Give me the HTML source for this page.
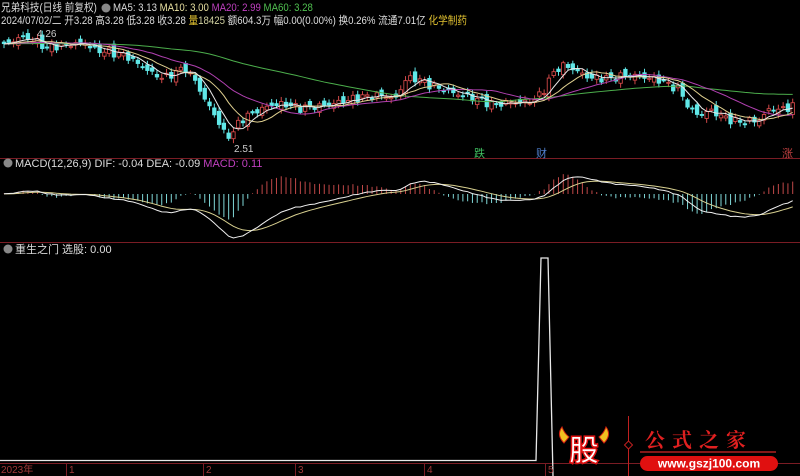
<!DOCTYPE html>
<html><head><meta charset="utf-8"><style>
body{margin:0;background:#000;width:800px;height:476px;overflow:hidden;position:relative;font-family:"Liberation Sans","Noto Sans CJK SC",sans-serif;}
.t{position:absolute;font-size:11px;white-space:nowrap;color:#ddd;line-height:12px}
.n{transform:scaleX(0.876);transform-origin:0 0}
</style></head><body>
<svg id="s" width="800" height="476" style="position:absolute;left:0;top:0">
<line x1="0" y1="158.5" x2="800" y2="158.5" stroke="#7a1c24"/>
<line x1="0" y1="242.5" x2="800" y2="242.5" stroke="#7a1c24"/>
<line x1="0" y1="463.5" x2="800" y2="463.5" stroke="#7a1c24"/>
<g id="g"></g>
<polyline points="0,460.5 536,460.5 541,258 548,258 553,476" fill="none" stroke="#e8e8e8" stroke-width="1.3"/>
<circle cx="8" cy="163" r="4.5" fill="#888"/><circle cx="8" cy="249" r="4.5" fill="#888"/><circle cx="106" cy="8" r="4.5" fill="#888"/>
<g fill="#a03838" font-size="10" font-family="Liberation Sans,Noto Sans CJK SC,sans-serif">
<text x="1" y="473">2023年</text><text x="69" y="473">1</text><text x="206" y="473">2</text><text x="298" y="473">3</text><text x="427" y="473">4</text><text x="548" y="473">5</text></g>
<g stroke="#7a1c24"><line x1="66.5" y1="464" x2="66.5" y2="476"/><line x1="203.5" y1="464" x2="203.5" y2="476"/><line x1="295.5" y1="464" x2="295.5" y2="476"/><line x1="424.5" y1="464" x2="424.5" y2="476"/><line x1="545.5" y1="464" x2="545.5" y2="476"/></g>
<path d="M562 427 q-6 8 2 16 l5 -6 q-5 -4 -7 -10z M606 427 q6 8 -2 16 l-5 -6 q5 -4 7 -10z" fill="#f0c020" stroke="#d02010"/>
<text x="584" y="461" text-anchor="middle" font-size="30" font-weight="bold" fill="#fff" stroke="#e01010" stroke-width="1.5" font-family="Noto Sans CJK SC,sans-serif">股</text>
<line x1="628.5" y1="416" x2="628.5" y2="476" stroke="#c02020"/>
<path d="M628.5 441 l4 4 l-4 4 l-4 -4z" fill="#000" stroke="#c02020"/>
<text x="645" y="447" font-size="20" font-weight="bold" fill="#e02020" letter-spacing="7" font-family="Noto Serif CJK SC,serif">公式之家</text>
<line x1="640" y1="452" x2="776" y2="452" stroke="#b02020" stroke-width="1.5"/>
<rect x="640" y="456" width="138" height="15" rx="7.5" fill="#e01010"/>
<text x="709" y="467.5" text-anchor="middle" font-size="12" font-weight="bold" fill="#fff">www.gszj100.com</text>
<text x="474" y="157" font-size="11" fill="#3fc060" font-family="Noto Sans CJK SC,sans-serif">跌</text>
<text x="536" y="157" font-size="11" fill="#5080d0" font-family="Noto Sans CJK SC,sans-serif">财</text>
<text x="782" y="157" font-size="11" fill="#c04040" font-family="Noto Sans CJK SC,sans-serif">涨</text>
<text x="37" y="37" font-size="10" fill="#ccc">4.26</text>
<text x="234" y="152" font-size="10" fill="#ccc">2.51</text>
</svg>
<div class="t n" style="left:1px;top:2px">兄弟科技(日线 前复权)</div>
<div class="t n" style="left:113px;top:2px">MA5: 3.13 <span style="color:#e8e0a0">MA10: 3.00</span> <span style="color:#c040c0">MA20: 2.99</span> <span style="color:#50c050">MA60: 3.28</span></div>
<div class="t n" style="left:1px;top:15px">2024/07/02/二 开3.28 高3.28 低3.28 收3.28 <span style="color:#e0c030">量</span><span style="color:#d0d0a0">18425</span> 额604.3万 幅0.00(0.00%) 换0.26% 流通7.01亿 <span style="color:#e0c030">化学制药</span></div>
<div class="t" style="left:15px;top:158px">MACD(12,26,9) DIF: -0.04 DEA: -0.09 <span style="color:#c040c0">MACD: 0.11</span></div>
<div class="t" style="left:15px;top:244px">重生之门 选股: 0.00</div>
<script>
var K=[[5,45],[20,37],[35,40],[45,48],[60,45],[85,43],[95,50],[110,52],[125,55],[140,65],[155,75],[165,78],[175,72],[185,68],[195,80],[205,100],[215,115],[225,135],[232,135],[240,120],[255,112],[270,105],[285,104],[300,108],[320,106],[340,102],[360,97],[385,95],[395,100],[405,80],[415,78],[430,85],[445,90],[460,95],[470,97],[480,100],[495,105],[510,102],[520,103],[535,100],[545,88],[555,70],[565,65],[575,70],[590,78],[610,78],[630,75],[660,80],[680,90],[690,110],[700,115],[710,110],[725,118],[740,122],[760,120],[770,108],[780,110],[795,105]];
function yAt(x){for(var i=0;i<K.length-1;i++){if(x<=K[i+1][0]){var a=K[i],b=K[i+1];return a[1]+(b[1]-a[1])*(x-a[0])/(b[0]-a[0]);}}return K[K.length-1][1];}
function p(y){return 4.26-(y-30)/64.6;} function Y(v){return 30+(4.26-v)*64.6;}
var N=166,dx=4.78,xs=[],c=[],pre=70;
for(var i=0;i<pre;i++)c.push(p(44)+0.03*Math.sin(i*1.3));
for(var i=0;i<N;i++){var x=4+i*dx;xs.push(x);c.push(p(yAt(x))+0.04*Math.sin(i*2.1)+0.03*Math.cos(i*3.7));}
function ma(n){var r=[];for(var i=pre;i<c.length;i++){var s=0;for(var j=0;j<n;j++)s+=c[i-j];r.push(s/n);}return r;}
var g=document.getElementById('g'),h='';
for(var i=0;i<N;i++){var cl=c[pre+i],op=c[pre+i-1]+0.06*Math.sin(i*1.7);var up=cl>=op;var hi=Math.max(cl,op)+0.03+0.04*Math.abs(Math.sin(i*2.9)),lo=Math.min(cl,op)-0.03-0.04*Math.abs(Math.cos(i*1.9));var x=xs[i];
var t=Y(Math.max(cl,op)),b=Y(Math.min(cl,op));if(b-t<1)b=t+1;var col=up?'#d04848':'#60e8e8';
h+='<line x1="'+x+'" y1="'+Y(hi)+'" x2="'+x+'" y2="'+Y(lo)+'" stroke="'+col+'"/>';
h+='<rect x="'+(x-1.7)+'" y="'+t+'" width="3.4" height="'+(b-t)+'" fill="'+(up?'#000':col)+'" stroke="'+col+'" stroke-width="0.9"/>';}
function line(a,col){var s='';for(var i=0;i<a.length;i++)s+=xs[i]+','+Y(a[i])+' ';return '<polyline points="'+s+'" fill="none" stroke="'+col+'" stroke-width="1"/>';}
h+=line(ma(60),'#4cae4c')+line(ma(20),'#b040b0')+line(ma(10),'#e0d090')+line(ma(5),'#e8e8e8');
var e12=c[0],e26=c[0],dea=0,D=[],E=[];for(var i=0;i<c.length;i++){e12=e12*11/13+c[i]*2/13;e26=e26*25/27+c[i]*2/27;var d=e12-e26;dea=dea*0.8+d*0.2;if(i>=pre){D.push(d);E.push(dea);}}
var mn=0;for(var i=0;i<N;i++)mn=Math.min(mn,D[i],E[i]);var sc=44/-mn,z=194;
for(var i=0;i<N;i++){var m=2*(D[i]-E[i]);h+='<line x1="'+xs[i]+'" y1="'+z+'" x2="'+xs[i]+'" y2="'+(z-m*sc)+'" stroke="'+(m>=0?'#c04848':'#80d8d8')+'"/>';}
function ml(a,col){var s='';for(var i=0;i<N;i++)s+=xs[i]+','+(z-a[i]*sc)+' ';return '<polyline points="'+s+'" fill="none" stroke="'+col+'"/>';}
h+=ml(E,'#d8d090')+ml(D,'#f0f0f0');
g.innerHTML=h;
</script>
</body></html>
